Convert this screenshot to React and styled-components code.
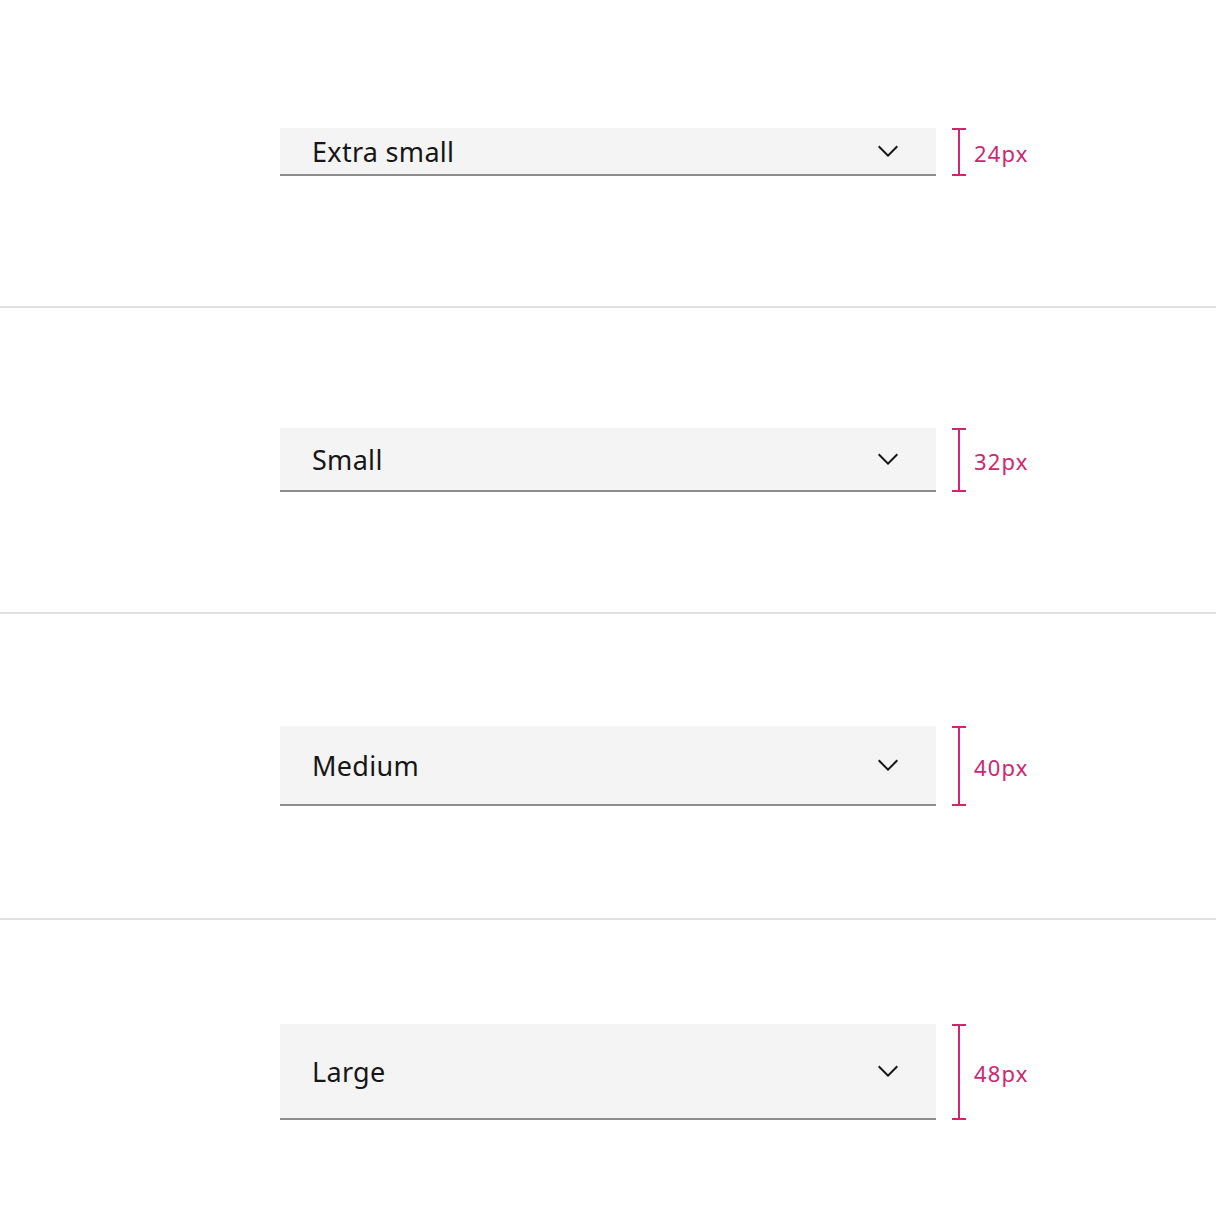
import React from "react";
import styled, { createGlobalStyle } from "styled-components";

const GlobalStyle = createGlobalStyle`
  html, body {
    margin: 0;
    padding: 0;
    background: #ffffff;
  }
  body {
    font-family: "Noto Sans", "Open Sans", Arial, sans-serif;
    -webkit-font-smoothing: antialiased;
  }
`;

const Page = styled.div`
  width: 1216px;
  min-height: 1228px;
  display: flex;
  flex-direction: column;
`;

const Section = styled.section`
  height: 306px;
  box-sizing: border-box;
  display: flex;
  align-items: center;
  padding-left: 280px;
  gap: 16px;

  &:first-child {
    padding-bottom: 2px;
  }

  & + & {
    border-top: 2px solid #e0e0e0;
  }
`;

const Dropdown = styled.button`
  width: 656px;
  height: ${({ $height }) => $height}px;
  box-sizing: border-box;
  display: flex;
  align-items: center;
  justify-content: space-between;
  padding: 0 32px;
  margin: 0;
  border: none;
  border-bottom: 2px solid #8d8d8d;
  background: #f4f4f4;
  color: #161616;
  font-family: inherit;
  font-size: 27px;
  letter-spacing: 0.3px;
  cursor: pointer;
  text-align: left;
`;

const Label = styled.span`
  line-height: 1;
`;

const Chevron = styled.svg`
  width: 32px;
  height: 32px;
  flex-shrink: 0;
  fill: #161616;
`;

const Spec = styled.div`
  display: flex;
  align-items: center;
  gap: 8px;
  height: ${({ $height }) => $height}px;
  color: #d02670;
`;

const Bracket = styled.div`
  position: relative;
  width: 14px;
  height: 100%;
  box-sizing: border-box;
  border-top: 2px solid currentColor;
  border-bottom: 2px solid currentColor;

  &::before {
    content: "";
    position: absolute;
    left: 6px;
    top: 0;
    bottom: 0;
    width: 2px;
    background: currentColor;
  }
`;

const SpecText = styled.span`
  font-size: 22px;
  letter-spacing: 1.2px;
  padding-top: 2px;
`;

const sizes = [
  { label: "Extra small", px: 24 },
  { label: "Small", px: 32 },
  { label: "Medium", px: 40 },
  { label: "Large", px: 48 },
];

function ChevronDown() {
  return (
    <Chevron viewBox="0 0 16 16" aria-hidden="true">
      <path d="M8 11L3 6 3.7 5.3 8 9.6 12.3 5.3 13 6z" />
    </Chevron>
  );
}

export default function App() {
  return (
    <>
      <GlobalStyle />
      <Page>
        {sizes.map(({ label, px }) => (
          <Section key={label}>
            <Dropdown type="button" $height={px * 2}>
              <Label>{label}</Label>
              <ChevronDown />
            </Dropdown>
            <Spec $height={px * 2}>
              <Bracket />
              <SpecText>{px}px</SpecText>
            </Spec>
          </Section>
        ))}
      </Page>
    </>
  );
}
